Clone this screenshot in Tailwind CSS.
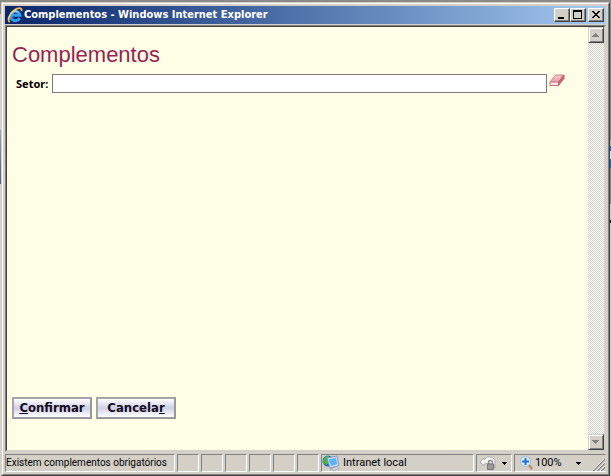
<!DOCTYPE html>
<html lang="pt-BR">
<head>
  <meta charset="UTF-8" />
  <meta name="viewport" content="width=device-width, initial-scale=1.0"/>
  <title>Complementos</title>
  <script src="https://cdn.jsdelivr.net/npm/@tailwindcss/browser@4"></script>
</head>
<body class="h-screen overflow-hidden bg-[#8c8a88] pt-[2px] flex text-black font-['DejaVu_Sans_Condensed','Noto_Sans',sans-serif]">

  <!-- Borda da janela de trás, à esquerda -->
  <div class="w-px shrink-0 flex flex-col bg-[#d4d0c8]">
    <div class="h-3 bg-[#8c8a88]"></div>
    <div class="mt-[116px] h-[54px] bg-linear-to-b from-[#8fa3c8] to-[#4a5f95]"></div>
  </div>

  <!-- Janela -->
  <div class="flex-1 min-w-0 flex flex-col bg-[#d4d0c8] border border-t-[#d4d0c8] border-l-[#d4d0c8] border-r-[#404040] border-b-[#404040]">
    <div class="flex-1 min-h-0 flex flex-col p-[2px] border border-t-white border-l-white border-r-[#808080] border-b-[#808080]">

      <!-- Barra de título -->
      <header class="h-[18px] shrink-0 flex items-center gap-px px-[2px] bg-linear-to-r from-[#0a246a] to-[#a6caf0]">
        <svg class="size-4 shrink-0" viewBox="0 0 16 16" fill="none">
          <path d="M12.600 11A4.700 4.700 0 1 1 13 8.300H5" stroke="#2f9df0" stroke-width="3"/>
          <path d="M5 6.500A3.800 3.800 0 0 1 11.500 5.600" stroke="#9be0ff" stroke-width="1.200"/>
          <path d="M3 15C-.5 14 2.500 6.500 7.500 3 11.500 .3 15.200 .5 14.500 4" stroke="#f0bd3c" stroke-width="1.800"/>
          <path d="M2 13C1 10 5 4.500 9 2.500" stroke="#fbe58a" stroke-width=".8"/>
        </svg>
        <h1 class="flex-1 truncate text-white text-[11px] leading-4 font-bold">Complementos - Windows Internet Explorer</h1>
        <div class="flex">
          <button aria-label="Minimizar" class="w-4 h-[14px] bg-[#d4d0c8] border border-t-white border-l-white border-r-[#404040] border-b-[#404040] shadow-[inset_-1px_-1px_#808080]">
            <svg class="w-[14px] h-3" viewBox="0 0 14 12" shape-rendering="crispEdges"><path d="M3 8h6v2H3z"/></svg>
          </button>
          <button aria-label="Maximizar" class="w-4 h-[14px] bg-[#d4d0c8] border border-t-white border-l-white border-r-[#404040] border-b-[#404040] shadow-[inset_-1px_-1px_#808080]">
            <svg class="w-[14px] h-3" viewBox="0 0 14 12" shape-rendering="crispEdges"><path fill-rule="evenodd" d="M2 1h9v9H2zM3 3v6h7V3z"/></svg>
          </button>
          <button aria-label="Fechar" class="ml-[2px] w-4 h-[14px] bg-[#d4d0c8] border border-t-white border-l-white border-r-[#404040] border-b-[#404040] shadow-[inset_-1px_-1px_#808080]">
            <svg class="w-[14px] h-3" viewBox="0 0 14 12" shape-rendering="crispEdges"><path d="M3 2h2v1h1v1h2V3h1V2h2v1h-1v1H9v1H8v1h1v1h1v1h1v1H9V8H8V7H6v1H5v1H3V8h1V7h1V6h1V5H5V4H4V3H3z"/></svg>
          </button>
        </div>
      </header>

      <!-- Conteúdo -->
      <div class="flex-1 min-h-0 mt-px flex border border-t-[#808080] border-l-[#808080] border-r-[#d4d0c8] border-b-[#d4d0c8]">
        <div class="flex-1 min-h-0 flex border border-t-[#404040] border-l-[#404040] border-r-transparent border-b-transparent">
          <main class="flex-1 min-w-0 bg-[#ffffe8] flex flex-col justify-between pt-3 pl-[5px] pr-5 pb-[31px]">
            <form id="complementos">
              <h2 class="text-[22px] leading-8 text-[#9c1f50] font-['Liberation_Sans',Arial,sans-serif]">Complementos</h2>
              <div class="mt-[3px] flex items-center">
                <label for="setor" class="w-10 pl-1 text-[11px] leading-4 font-bold font-['Noto_Sans',sans-serif]">Setor:</label>
                <input id="setor" type="text" class="flex-1 min-w-0 h-[19px] px-1 text-[11px] bg-white border border-[#7b7b7b] outline-none"/>
                <button type="button" aria-label="Limpar" class="ml-[2px] w-[19px] h-[19px] flex items-start">
                  <svg class="w-4 h-[13px]" viewBox="0 0 16 13">
                    <path d="M6.500 1H15L9.500 8H1z" fill="#efaeb5" stroke="#d58a92"/>
                    <path d="M1 8h8.500v3.500H1z" fill="#fbe6e6" stroke="#c9727c"/>
                    <path d="M9.500 8L15 1v3.500l-5.500 7z" fill="#cc6a76" stroke="#c0606c"/>
                    <path d="M6 3h5" stroke="#fbdcdf"/>
                  </svg>
                </button>
              </div>
            </form>
            <div class="flex gap-1">
              <button type="submit" form="complementos" class="w-20 h-[22px] flex items-center justify-center border-2 border-t-[#a3a3a8] border-l-[#a3a3a8] border-r-[#98989d] border-b-[#98989d] bg-linear-to-b from-white via-[#d0d0e6] to-white text-[13px] leading-4 font-bold text-[#140c20]"><u>C</u>onfirmar</button>
              <button type="button" class="w-20 h-[22px] flex items-center justify-center border-2 border-t-[#a3a3a8] border-l-[#a3a3a8] border-r-[#98989d] border-b-[#98989d] bg-linear-to-b from-white via-[#d0d0e6] to-white text-[13px] leading-4 font-bold text-[#140c20]">Cancela<u>r</u></button>
            </div>
          </main>
          <div class="w-4 shrink-0 flex flex-col justify-between bg-[repeating-conic-gradient(#d4d0c8_0_25%,#fff_0_50%)] bg-size-[2px_2px]">
            <button aria-label="Rolar para cima" class="h-4 bg-[#d4d0c8] border border-t-[#d4d0c8] border-l-[#d4d0c8] border-r-[#404040] border-b-[#404040] shadow-[inset_1px_1px_#fff,inset_-1px_-1px_#808080]">
              <svg class="size-[14px]" viewBox="0 0 14 14" shape-rendering="crispEdges"><path d="M6 5h1v1h1v1h1v1h1v1H3V8h1V7h1V6h1z" fill="#808080"/></svg>
            </button>
            <button aria-label="Rolar para baixo" class="h-4 bg-[#d4d0c8] border border-t-[#d4d0c8] border-l-[#d4d0c8] border-r-[#404040] border-b-[#404040] shadow-[inset_1px_1px_#fff,inset_-1px_-1px_#808080]">
              <svg class="size-[14px]" viewBox="0 0 14 14" shape-rendering="crispEdges"><path d="M3 5h7v1H9v1H8v1H7v1H6V8H5V7H4V6H3z" fill="#808080"/></svg>
            </button>
          </div>
        </div>
      </div>

      <!-- Barra de status -->
      <footer class="h-[18px] shrink-0 mt-[2px] flex gap-[2px] text-[11px] leading-4 font-['Roboto','Liberation_Sans',sans-serif]">
        <div class="w-[170px] whitespace-nowrap text-[10px] leading-4 border border-t-[#808080] border-l-[#808080] border-r-white border-b-white">Existem complementos obrigatórios</div>
        <div class="w-[22px] border border-t-[#808080] border-l-[#808080] border-r-white border-b-white"></div>
        <div class="w-[22px] border border-t-[#808080] border-l-[#808080] border-r-white border-b-white"></div>
        <div class="w-[22px] border border-t-[#808080] border-l-[#808080] border-r-white border-b-white"></div>
        <div class="w-[22px] border border-t-[#808080] border-l-[#808080] border-r-white border-b-white"></div>
        <div class="w-[22px] border border-t-[#808080] border-l-[#808080] border-r-white border-b-white"></div>
        <div class="w-[22px] border border-t-[#808080] border-l-[#808080] border-r-white border-b-white"></div>
        <div class="flex-1 min-w-0 flex items-center gap-[3px] border border-t-[#808080] border-l-[#808080] border-r-white border-b-white">
          <svg class="w-[18px] h-4" viewBox="0 0 18 16">
            <circle cx="6" cy="6" r="5.500" fill="#2f62c8"/>
            <path d="M1 5c1-4 5-5 6-4L6 5l1 3-3 2-3-2z" fill="#43b649"/>
            <path d="M5 3L15 1l2 9.500L8 13z" fill="#dfe8f4" stroke="#7f97bd"/>
            <path d="M6.500 4.300L14 2.700l1.300 6.600L9 11z" fill="#58b4f7"/>
            <path d="M8 14l7-2.500 2 2-5 2z" fill="#d3d8e2" stroke="#8794ad" stroke-width=".6"/>
          </svg>
          <span>Intranet local</span>
        </div>
        <button class="w-9 flex items-center justify-between pl-[3px] pr-1 border border-t-[#808080] border-l-[#808080] border-r-white border-b-white" aria-label="Modo protegido">
          <svg class="w-4 h-4" viewBox="0 0 16 16" fill="none">
            <path d="M0 7l4-4v2c2-4 8-4 11 0v8c0-4-4-6-11-4v2z" fill="#f4f4f4" stroke="#a2a2a2" stroke-width=".8"/>
            <path d="M8.500 9V7.500a2 2 0 0 1 4 0V9" stroke="#858585" stroke-width="1.300"/>
            <path d="M7.500 9h6v5.500h-6z" fill="#9c9c9c" stroke="#777"/>
          </svg>
          <svg class="w-[5px] h-[3px]" viewBox="0 0 5 3" shape-rendering="crispEdges"><path d="M0 0h5v1H4v1H3v1H2V2H1V1H0z"/></svg>
        </button>
        <div class="w-[92px] flex border border-t-[#808080] border-l-[#808080] border-r-transparent border-b-white">
          <button class="flex-1 flex items-center pl-1">
            <svg class="w-4 h-4" viewBox="0 0 16 16" fill="none">
              <path d="M9 9l4 5" stroke="#c08a5a" stroke-width="2.500"/>
              <circle cx="6.500" cy="6.500" r="5" fill="#e3f1ff" stroke="#8fb7e6"/>
              <path d="M6.500 3v7M3 6.500h7" stroke="#1d6fd6" stroke-width="2"/>
            </svg>
            <span class="flex-1 text-left">100%</span>
            <svg class="w-[5px] h-[3px]" viewBox="0 0 5 3" shape-rendering="crispEdges"><path d="M0 0h5v1H4v1H3v1H2V2H1V1H0z"/></svg>
          </button>
          <svg class="ml-3 w-3 h-3 self-end" viewBox="0 0 12 12"><path d="M0 12L12 0M4 12l8-8M8 12l4-4" stroke="#808080" stroke-width="1.500"/><path d="M-1 12L12-1M3 12l9-9M7 12l5-5" stroke="#fff" stroke-width=".8"/></svg>
        </div>
      </footer>
    </div>
  </div>

  <!-- Borda da janela de trás, à direita -->
  <div class="w-px shrink-0 flex flex-col bg-[#d4d0c8]">
    <div class="h-[138px] bg-[#8c8a88]"></div>
    <div class="h-[6px] bg-[#b5b3b0]"></div>
    <div class="h-[5px] bg-[#2f62b0]"></div>
    <div class="h-2 bg-[#cfe6fa]"></div>
    <div class="h-[9px] bg-[#2f62b0]"></div>
    <div class="h-9 bg-[#8c8a88]"></div>
    <div class="mt-4 h-[3px] bg-black"></div>
  </div>
</body>
</html>
